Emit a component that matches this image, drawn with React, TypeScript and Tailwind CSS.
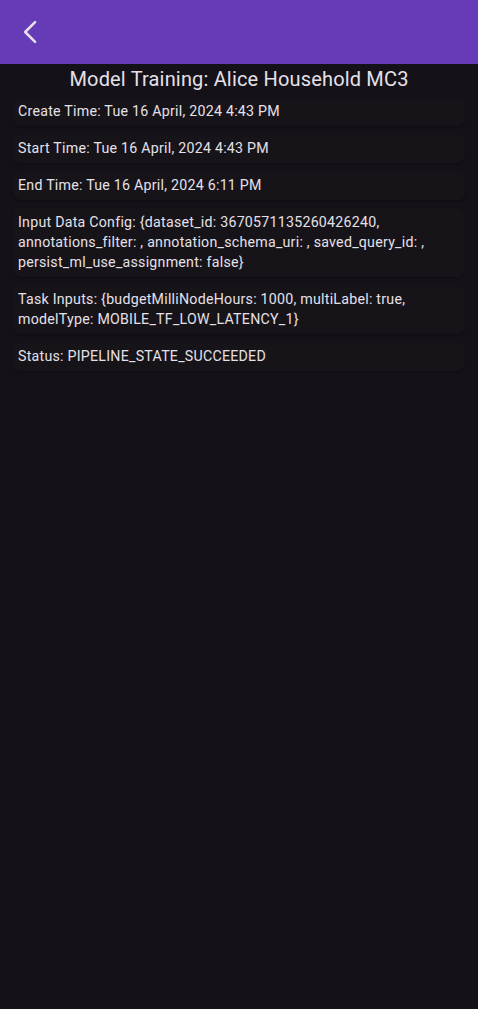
import React from "react";

const items: string[] = [
  "Create Time: Tue 16 April, 2024 4:43 PM",
  "Start Time: Tue 16 April, 2024 4:43 PM",
  "End Time: Tue 16 April, 2024 6:11 PM",
  "Input Data Config: {dataset_id: 3670571135260426240, annotations_filter: , annotation_schema_uri: , saved_query_id: , persist_ml_use_assignment: false}",
  "Task Inputs: {budgetMilliNodeHours: 1000, multiLabel: true, modelType: MOBILE_TF_LOW_LATENCY_1}",
  "Status: PIPELINE_STATE_SUCCEEDED",
];

export default function App() {
  return (
    <div
      className="w-[478px] h-[1009px] bg-[#141218] text-[#e6e0e9] flex flex-col"
      style={{ fontFamily: "Roboto, 'Noto Sans', sans-serif" }}
    >
      <div className="h-[64px] bg-[#673ab7] flex items-center pl-[16px] shrink-0">
        <svg width="28" height="28" viewBox="0 0 24 24" className="ml-[1px]">
          <path
            d="M15.5 3.5 L7 12 L15.5 20.5"
            fill="none"
            stroke="#e6e0e9"
            strokeWidth="2.2"
            strokeLinecap="round"
            strokeLinejoin="round"
          />
        </svg>
      </div>
      <div className="h-[29px] text-[20px] leading-[30px] tracking-[0.17px] text-center">
        Model Training: Alice Household MC3
      </div>
      <div className="flex flex-col pl-[13px] pr-[13px]">
        {items.map((t, i) => (
          <div
            key={i}
            className="my-[4px] bg-[#161419] rounded-[8px] shadow-[0_1px_2px_rgba(0,0,0,0.3)] pl-[5px] pr-[10px] pt-[4px] pb-[5px] text-[14.2px] leading-[20px] tracking-[0.25px]"
          >
            {t}
          </div>
        ))}
      </div>
    </div>
  );
}
